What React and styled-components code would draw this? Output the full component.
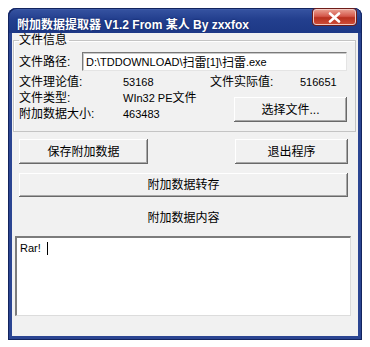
import styled, { createGlobalStyle } from 'styled-components'

const GlobalStyle = createGlobalStyle`
  body {
    margin: 0;
    background: #ffffff;
    font-family: "Liberation Sans", "Noto Sans CJK SC", sans-serif;
    font-size: 12px;
    color: #000;
  }
`

export default function App() {
  return (
    <>
      <GlobalStyle />
      <Window>
        <TitleBar>
          <Title>附加数据提取器 V1.2 From 某人 By zxxfox</Title>
          <CloseButton>
            <svg width="13" height="11" viewBox="0 0 13 11">
              <path d="M2 1.5 L11 9.5 M11 1.5 L2 9.5" stroke="#fff" strokeWidth="2.6" strokeLinecap="round" />
            </svg>
          </CloseButton>
        </TitleBar>
        <Client>
          <GroupBox>
            <Legend>文件信息</Legend>
            <PathRow>
              <PathLabel>文件路径:</PathLabel>
              <PathInput>
                <Num>D:\TDDOWNLOAD\</Num>扫雷<Num>[1]\</Num>扫雷<Num>.exe</Num>
              </PathInput>
            </PathRow>
            <InfoGrid>
              <Cell>文件理论值:</Cell>
              <Cell><Num>53168</Num></Cell>
              <Cell>
                <RightLabel>文件实际值:</RightLabel>
                <Num>516651</Num>
              </Cell>
              <Cell>文件类型:</Cell>
              <Cell><Num>WIn32 PE</Num>文件</Cell>
              <SelectButton>选择文件...</SelectButton>
              <Cell>附加数据大小:</Cell>
              <Cell><Num>463483</Num></Cell>
            </InfoGrid>
          </GroupBox>
          <ButtonRow>
            <Button $width={129}>保存附加数据</Button>
            <Button $width={113}>退出程序</Button>
          </ButtonRow>
          <WideButton>附加数据转存</WideButton>
          <Caption>附加数据内容</Caption>
          <TextBox>
            <Num>Rar!</Num>
            <Caret />
          </TextBox>
        </Client>
      </Window>
    </>
  )
}

const Window = styled.div`
  margin: 8px 0 0 8px;
  width: 354px;
  height: 332px;
  box-sizing: border-box;
  display: flex;
  flex-direction: column;
  padding: 0 4px 4px;
  background: #2b4592;
  border-radius: 8px 8px 0 0;
  overflow: hidden;
  box-shadow: inset 0 0 0 1px #13245e;
`

const TitleBar = styled.div`
  height: 25px;
  margin: 0 -4px;
  padding: 1px 6px 0 9px;
  box-sizing: border-box;
  display: flex;
  align-items: flex-start;
  justify-content: space-between;
  background: linear-gradient(to bottom, #5a78c4 0, #34519f 2px, #233f8e 45%, #1d3886 100%);
  border-radius: 8px 8px 0 0;
  box-shadow: inset 1px 1px 0 #13245e, inset -1px 0 0 #13245e;
`

const Title = styled.div`
  margin-top: 8px;
  font-weight: bold;
  font-size: 12px;
  line-height: 16px;
  color: #fff;
  white-space: nowrap;
  text-shadow: 0 0 2px #0d1f5a;
`

const CloseButton = styled.div`
  width: 43px;
  height: 16px;
  box-sizing: border-box;
  display: flex;
  align-items: center;
  justify-content: center;
  border: 1px solid #f3c9c2;
  border-radius: 3px;
  background: linear-gradient(to bottom, #e89a8c 0, #d4574a 45%, #b8301f 55%, #cd4b36 100%);
  box-shadow: 0 0 0 1px #6e1d1a;
`

const Client = styled.div`
  flex: 1;
  display: flex;
  flex-direction: column;
  padding: 0 10px 0 7px;
  background: #f1f1f1;
`

const GroupBox = styled.fieldset`
  margin: 0 -8px 0 -6px;
  padding: 0 8px 9px 5px;
  border: 1px solid #c4c4c4;
  box-shadow: 1px 1px 0 #fff inset;
  min-width: 0;
`

const Legend = styled.legend`
  padding: 0 2px 0 0;
  line-height: 14px;
  font-size: 12px;
`

const PathRow = styled.div`
  margin-top: 5px;
  display: flex;
  align-items: center;
  height: 19px;
`

const PathLabel = styled.span`
  width: 63px;
  flex-shrink: 0;
  line-height: 14px;
`

const PathInput = styled.div`
  flex: 1;
  height: 19px;
  box-sizing: border-box;
  padding: 0 3px;
  display: flex;
  align-items: center;
  white-space: nowrap;
  background: #fff;
  border-top: 1px solid #7a7a7a;
  border-left: 1px solid #7a7a7a;
  border-bottom: 1px solid #e4e4e4;
  border-right: 1px solid #e4e4e4;
  box-shadow: inset 1px 1px 0 #c8c8c8;
`

const Num = styled.span`
  font-family: "Liberation Sans", sans-serif;
  font-size: 11px;
`

const InfoGrid = styled.div`
  margin-top: 3px;
  display: grid;
  grid-template-columns: 104px 87px 1fr;
  grid-template-rows: repeat(3, 16px);
`

const Cell = styled.div`
  display: flex;
  align-items: center;
  line-height: 14px;
  white-space: nowrap;
`

const RightLabel = styled.span`
  width: 90px;
`

const Button = styled.div`
  width: ${(p) => p.$width}px;
  height: 25px;
  box-sizing: border-box;
  display: flex;
  align-items: center;
  justify-content: center;
  background: #f1f1f1;
  line-height: 14px;
  box-shadow: inset -1px -1px 0 #696969, inset 1px 1px 0 #ffffff, inset -2px -2px 0 #a8a8a8;
`

const SelectButton = styled(Button)`
  width: 113px;
  grid-column: 3;
  grid-row: 2 / span 2;
  justify-self: end;
  align-self: end;
`

const ButtonRow = styled.div`
  margin-top: 7px;
  display: flex;
  justify-content: space-between;
`

const WideButton = styled(Button)`
  width: auto;
  height: 24px;
  margin-top: 9px;
`

const Caption = styled.div`
  margin-top: 14px;
  text-align: center;
  line-height: 14px;
`

const TextBox = styled.div`
  margin: 11px -3px 0 -4px;
  height: 80px;
  box-sizing: border-box;
  padding: 3px 3px;
  display: flex;
  align-items: flex-start;
  background: #fff;
  border-top: 2px solid #7c7c7c;
  border-left: 2px solid #7c7c7c;
  border-bottom: 1px solid #dcdcdc;
  border-right: 1px solid #dcdcdc;
  line-height: 14px;
`

const Caret = styled.span`
  width: 1px;
  height: 13px;
  margin: 1px 0 0 6px;
  background: #000;
`
